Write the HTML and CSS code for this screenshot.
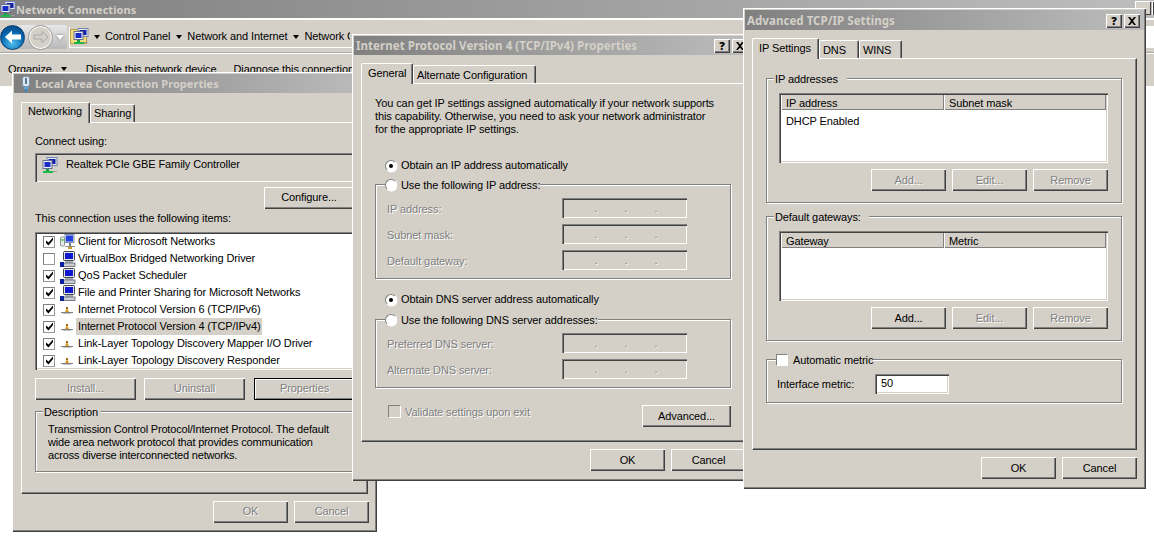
FILE: index.html
```html
<!DOCTYPE html>
<html lang="en">
<head>
<meta charset="utf-8">
<title>Network Connections</title>
<link rel="stylesheet" href="styles.css">
</head>
<body>
<svg class="defs" width="0" height="0" aria-hidden="true">
  <symbol id="i-net" viewBox="0 0 16 16">
    <rect x="5" y="0.5" width="10" height="8" fill="#dfe6f5" stroke="#7a86a8"/>
    <rect x="6.5" y="2" width="7" height="5" fill="#1420a8"/>
    <rect x="1" y="3.5" width="9" height="8" fill="#eef0f6" stroke="#66708c"/>
    <rect x="2.5" y="5" width="6" height="5" fill="#1a2cc8"/>
    <rect x="4" y="12" width="3" height="2" fill="#18a040"/>
    <rect x="1" y="14" width="10" height="2" fill="#1fb84c"/>
    <rect x="11" y="14" width="4" height="1" fill="#a0a0a0"/>
  </symbol>
  <symbol id="i-pc" viewBox="0 0 16 16">
    <rect x="3.5" y="0.5" width="11" height="9" rx="1" fill="#e4e6ea" stroke="#40444c"/>
    <rect x="5" y="2" width="8" height="6" fill="#1018d0"/>
    <rect x="5" y="10" width="8" height="2" fill="#b0b4bc"/>
    <rect x="3" y="12" width="12" height="3.5" fill="#c8ccd4" stroke="#50545c" stroke-width="0.7"/>
    <rect x="0" y="11" width="4" height="5" fill="#0a1ea0"/>
  </symbol>
  <symbol id="i-client" viewBox="0 0 16 16">
    <rect x="0.5" y="3" width="4" height="9" rx="1" fill="#e8ece8" stroke="#8a9a8a"/>
    <rect x="1.5" y="5" width="2" height="2" fill="#50c050"/>
    <rect x="5" y="0.5" width="9" height="8" fill="#dce4f4" stroke="#8090b0"/>
    <rect x="6" y="1.5" width="7" height="6" fill="#2040e0"/>
    <rect x="9" y="9" width="2" height="3" fill="#708090"/>
    <rect x="5" y="12" width="10" height="1" fill="#909090"/>
    <rect x="8" y="13" width="4" height="2" fill="#d0a020"/>
  </symbol>
  <symbol id="i-proto" viewBox="0 0 16 16">
    <rect x="1" y="10" width="12" height="1" fill="#808080"/>
    <path d="M5 10 L7 6 L9 10 Z" fill="#d89a20"/>
    <rect x="6" y="5" width="2" height="2" fill="#a06a10"/>
    <rect x="3" y="11" width="8" height="1" fill="#c0c0c0"/>
  </symbol>
  <symbol id="i-plug" viewBox="0 0 16 16">
    <rect x="4.500" y="0.5" width="7" height="10" rx="2" fill="#dbe9f4" stroke="#7a93a8"/>
    <rect x="7" y="2" width="2" height="6" fill="#5c7c96"/>
    <rect x="6" y="11" width="4" height="2" fill="#5fa8d8"/>
    <rect x="7" y="13" width="2" height="3" fill="#2f86c8"/>
  </symbol>
  <symbol id="i-folder" viewBox="0 0 18 20">
    <path d="M0.5 2 h7 l2 2 h8 v13 h-17 Z" fill="#f4dc7c" stroke="#b59a3c"/>
  </symbol>
  <symbol id="i-x" viewBox="0 0 10 8">
    <path d="M1 0 L3 0 L5 2.500 L7 0 L9 0 L6 4 L9 8 L7 8 L5 5.500 L3 8 L1 8 L4 4 Z" fill="#000"/>
  </symbol>
  <symbol id="i-check" viewBox="0 0 9 9">
    <path d="M1 3.500 L1 6 L3.500 8.500 L8 3 L8 0.500 L3.500 5.500 Z" fill="#000"/>
  </symbol>
</svg>

<div class="desk">
  <header class="explorer-title">
    <svg class="ico16 explorer-ico"><use href="#i-net"/></svg>
    <span class="explorer-name">Network Connections</span>
    <span class="explorer-ctl"><i></i><i></i></span>
  </header>
  <div class="explorer-bars">
    <nav class="navrow">
      <div class="navpill">
        <span class="nav-back"><svg width="20" height="16" viewBox="0 0 20 16"><path d="M2 8 L9 1.500 V5.500 H18 V10.500 H9 V14.500 Z" fill="#fff"/></svg></span>
        <span class="nav-fwd"><svg width="18" height="14" viewBox="0 0 18 14"><path d="M16 7 L10 1.500 V5 H2 V9 H10 V12.500 Z" fill="#d4d0c8" stroke="#a8a8a8"/></svg></span>
        <span class="nav-drop"></span>
      </div>
      <div class="addr">
        <span class="addr-ico"><svg class="addr-folder"><use href="#i-folder"/></svg><svg class="addr-net"><use href="#i-net"/></svg></span>
        <span class="crumb first">Control Panel</span>
        <span class="crumb">Network and Internet</span>
        <span class="crumb crumb-last"><span class="crumb-clip">Network Connections</span></span>
        <span class="addr-search"></span>
      </div>
    </nav>
    <div class="cmdrow">
      <span class="cmd cmd-org">Organize</span>
      <span class="cmd-arrow"></span>
      <span class="cmd cmd-dis">Disable this network device</span>
      <span class="cmd">Diagnose this connection</span>
    </div>
  </div>

  <section class="win win-lan">
    <div class="titlebar tb-lan"><svg class="ico16 lan-ico"><use href="#i-plug"/></svg><span>Local Area Connection Properties</span></div>
    <div class="tabs tabs-lan">
      <span class="tab active t-net">Networking</span>
      <span class="tab t-share">Sharing</span>
    </div>
    <div class="panel panel-lan">
      <div class="txt">Connect using:</div>
      <div class="adapter sunken"><svg class="ico16"><use href="#i-net"/></svg><span>Realtek PCIe GBE Family Controller</span></div>
      <div class="cfg-row"><button class="btn btn-cfg">Configure...</button></div>
      <div class="txt uses">This connection uses the following items:</div>
      <ul class="items sunken">
        <li class="item"><span class="cb on"><svg><use href="#i-check"/></svg></span><svg class="ico16"><use href="#i-client"/></svg><span class="lbl">Client for Microsoft Networks</span></li>
        <li class="item"><span class="cb"></span><svg class="ico16"><use href="#i-pc"/></svg><span class="lbl">VirtualBox Bridged Networking Driver</span></li>
        <li class="item"><span class="cb on"><svg><use href="#i-check"/></svg></span><svg class="ico16"><use href="#i-pc"/></svg><span class="lbl">QoS Packet Scheduler</span></li>
        <li class="item"><span class="cb on"><svg><use href="#i-check"/></svg></span><svg class="ico16"><use href="#i-pc"/></svg><span class="lbl">File and Printer Sharing for Microsoft Networks</span></li>
        <li class="item"><span class="cb on"><svg><use href="#i-check"/></svg></span><svg class="ico16"><use href="#i-proto"/></svg><span class="lbl">Internet Protocol Version 6 (TCP/IPv6)</span></li>
        <li class="item"><span class="cb on"><svg><use href="#i-check"/></svg></span><svg class="ico16"><use href="#i-proto"/></svg><span class="lbl sel">Internet Protocol Version 4 (TCP/IPv4)</span></li>
        <li class="item"><span class="cb on"><svg><use href="#i-check"/></svg></span><svg class="ico16"><use href="#i-proto"/></svg><span class="lbl">Link-Layer Topology Discovery Mapper I/O Driver</span></li>
        <li class="item"><span class="cb on"><svg><use href="#i-check"/></svg></span><svg class="ico16"><use href="#i-proto"/></svg><span class="lbl">Link-Layer Topology Discovery Responder</span></li>
      </ul>
      <div class="item-btns">
        <button class="btn btn-wide dis"><span>Install...</span></button>
        <button class="btn btn-wide dis"><span>Uninstall</span></button>
        <button class="btn btn-wide btn-default dis"><span>Properties</span></button>
      </div>
      <div class="group g-desc">
        <div class="legend"><span class="lg-text lg-desc">Description</span></div>
        <p class="desc">Transmission Control Protocol/Internet Protocol. The default<br>wide area network protocol that provides communication<br>across diverse interconnected networks.</p>
      </div>
    </div>
    <div class="footer footer-lan">
      <button class="btn btn-foot dis"><span>OK</span></button>
      <button class="btn btn-foot dis"><span>Cancel</span></button>
    </div>
  </section>

  <section class="win win-ip4">
    <div class="titlebar tb-ip4"><span>Internet Protocol Version 4 (TCP/IPv4) Properties</span><span class="ctl"><b class="ctl-btn">?</b><b class="ctl-btn"><svg><use href="#i-x"/></svg></b></span></div>
    <div class="tabs tabs-ip4">
      <span class="tab active t-gen">General</span>
      <span class="tab t-alt">Alternate Configuration</span>
    </div>
    <div class="panel panel-ip4">
      <p class="intro">You can get IP settings assigned automatically if your network supports<br>this capability. Otherwise, you need to ask your network administrator<br>for the appropriate IP settings.</p>
      <div class="radio-row r-first"><span class="radio on"></span><span>Obtain an IP address automatically</span></div>
      <div class="group g-ip">
        <div class="legend lg-radio"><span class="radio"></span><span class="lg-text">Use the following IP address:</span></div>
        <div class="field-row first"><span class="dis-txt">IP address:</span><span class="ipf"><i>.</i><i>.</i><i>.</i></span></div>
        <div class="field-row"><span class="dis-txt">Subnet mask:</span><span class="ipf"><i>.</i><i>.</i><i>.</i></span></div>
        <div class="field-row"><span class="dis-txt">Default gateway:</span><span class="ipf"><i>.</i><i>.</i><i>.</i></span></div>
      </div>
      <div class="radio-row r-dns"><span class="radio on"></span><span>Obtain DNS server address automatically</span></div>
      <div class="group g-dns">
        <div class="legend lg-radio"><span class="radio"></span><span class="lg-text">Use the following DNS server addresses:</span></div>
        <div class="field-row first"><span class="dis-txt">Preferred DNS server:</span><span class="ipf"><i>.</i><i>.</i><i>.</i></span></div>
        <div class="field-row"><span class="dis-txt">Alternate DNS server:</span><span class="ipf"><i>.</i><i>.</i><i>.</i></span></div>
      </div>
      <div class="validate-row">
        <span class="validate"><span class="cb cb-dis"></span><span class="dis-txt">Validate settings upon exit</span></span>
        <button class="btn btn-adv">Advanced...</button>
      </div>
    </div>
    <div class="footer">
      <button class="btn btn-foot">OK</button>
      <button class="btn btn-foot">Cancel</button>
    </div>
  </section>

  <section class="win win-adv">
    <div class="titlebar tb-adv"><span>Advanced TCP/IP Settings</span><span class="ctl"><b class="ctl-btn">?</b><b class="ctl-btn"><svg><use href="#i-x"/></svg></b></span></div>
    <div class="tabs tabs-adv">
      <span class="tab active t-ips">IP Settings</span>
      <span class="tab t-dns">DNS</span>
      <span class="tab t-wins">WINS</span>
    </div>
    <div class="panel panel-adv">
      <div class="group g-adv">
        <div class="legend"><span class="lg-text lg-ip">IP addresses</span></div>
        <div class="lv sunken">
          <div class="lv-head"><span class="lv-col c1">IP address</span><span class="lv-col c2">Subnet mask</span></div>
          <div class="lv-row">DHCP Enabled</div>
        </div>
        <div class="adv-btns">
          <button class="btn btn-foot dis"><span>Add...</span></button>
          <button class="btn btn-foot dis"><span>Edit...</span></button>
          <button class="btn btn-foot dis"><span>Remove</span></button>
        </div>
      </div>
      <div class="group g-adv g-gw">
        <div class="legend"><span class="lg-text lg-gw">Default gateways:</span></div>
        <div class="lv sunken">
          <div class="lv-head"><span class="lv-col c1">Gateway</span><span class="lv-col c2">Metric</span></div>
        </div>
        <div class="adv-btns">
          <button class="btn btn-foot">Add...</button>
          <button class="btn btn-foot dis"><span>Edit...</span></button>
          <button class="btn btn-foot dis"><span>Remove</span></button>
        </div>
      </div>
      <div class="group g-metric">
        <div class="legend lg-check"><span class="cb cb-legend"></span><span class="lg-text">Automatic metric</span></div>
        <div class="metric-row"><span class="metric-lbl">Interface metric:</span><span class="metric-in sunken">50</span></div>
      </div>
    </div>
    <div class="footer">
      <button class="btn btn-foot">OK</button>
      <button class="btn btn-foot">Cancel</button>
    </div>
  </section>
</div>
</body>
</html>
```

FILE: styles.css
```css
* { box-sizing: border-box; }
html, body { margin: 0; padding: 0; background: #fff; }
body {
  font-family: "Liberation Sans", sans-serif;
  font-size: 11px;
  line-height: 13px;
  letter-spacing: -0.1px;
  color: #000;
}
.defs { position: absolute; }
.desk { position: relative; width: 1154px; height: 536px; overflow: hidden; background: #fff; }
.ico16 { width: 16px; height: 16px; flex: none; display: block; }
p { margin: 0; }
i { font-style: normal; }

/* Background explorer window */
.explorer-title {
  height: 18px;
  display: flex;
  align-items: center;
  background: linear-gradient(90deg, #808080, #bdbdbd);
  color: #d4d0c8;
  font-family: "Noto Sans", sans-serif;
  font-weight: bold;
  font-size: 11px;
  letter-spacing: 0.05px;
}
.explorer-ico { margin: 0; }
.explorer-ctl { margin-left: auto; display: flex; gap: 1px; align-self: flex-start; margin-top: 1px; padding-right: 0; }
.explorer-ctl i { width: 16px; height: 14px; background: #d4d0c8; box-shadow: inset 1px 1px #fff, inset -1px -1px #404040; }
.explorer-ctl i:last-child { width: 2px; }
.explorer-bars { height: 68px; background: #d4d0c8; border-top: 2px solid #fff; }
.navrow { height: 33px; display: flex; align-items: center; padding-top: 2px; border-bottom: 1px solid #a8a8a8; box-shadow: 0 1px #fff; }
.navpill { width: 67px; height: 24px; margin-left: 0; flex: none; display: flex; align-items: center; background: linear-gradient(#e8e8e8, #b8b8b8); border-radius: 12px 2px 2px 12px; }
.nav-back { width: 25px; height: 25px; flex: none; border-radius: 50%; display: flex; align-items: center; justify-content: center; background: radial-gradient(circle at 50% 75%, #4ec0f0 0, #0a66ae 55%, #063a78 100%); border: 1px solid #0a3f70; }
.nav-fwd { width: 25px; height: 25px; margin-left: 3px; flex: none; border-radius: 50%; display: flex; align-items: center; justify-content: center; background: #d4d0c8; border: 1px solid #9a9a9a; box-shadow: inset 0 0 0 1px #fff; }
.nav-drop { margin-left: 3px; width: 0; height: 0; border: 4px solid transparent; border-top: 5px solid #fff; border-bottom: 0; filter: drop-shadow(0 0 1px #707070); }
.addr { height: 21px; flex: 1; margin-left: 2px; display: flex; align-items: center; border-bottom: 1px solid #fff; border-left: 1px solid #fff; }
.addr-ico { width: 17px; height: 19px; flex: none; display: flex; position: relative; }
.addr-folder { width: 18px; height: 20px; }
.addr-net { width: 16px; height: 16px; position: absolute; left: 3px; top: 1px; }
.crumb { display: flex; align-items: center; white-space: nowrap; margin-left: 6px; }
.crumb.first { margin-left: 7px; }
.crumb::before { content: ""; width: 0; height: 0; margin-right: 5px; border: 3px solid transparent; border-top: 4px solid #000; border-bottom: 0; }
.crumb-clip { display: block; width: 46px; overflow: hidden; }
.addr-search { margin-left: auto; width: 200px; height: 21px; background: #fff; flex: none; }
.cmdrow { height: 33px; padding: 10px 0 0 8px; display: flex; align-items: flex-start; white-space: nowrap; }
.cmd-arrow { width: 0; height: 0; margin: 4px 19px 0 9px; border: 3px solid transparent; border-top: 4px solid #000; border-bottom: 0; }
.cmd-dis { margin-right: 17px; }

/* Dialog windows sit on a free desktop */
.win {
  position: absolute;
  display: flex;
  flex-direction: column;
  padding: 2px;
  background: #d4d0c8;
  box-shadow: inset 1px 1px #fff, inset -1px -1px #404040, inset -2px -2px #808080;
}
.win-lan { left: 12px; top: 72px; width: 365px; height: 460px; }
.win-ip4 { left: 352px; top: 34px; width: 402px; height: 447px; }
.win-adv { left: 743px; top: 8px; width: 403px; height: 481px; }

.titlebar {
  flex: none;
  display: flex;
  align-items: center;
  background: linear-gradient(90deg, #808080, #bdbdbd);
  color: #d4d0c8;
  font-family: "Noto Sans", sans-serif;
  font-weight: bold;
  font-size: 11.5px;
  letter-spacing: 0.05px;
  white-space: nowrap;
}
.tb-lan { height: 19px; padding-left: 2px; font-size: 11px; }
.lan-ico { margin-right: 1px; margin-left: 2px; }
.tb-ip4 { height: 19px; padding-left: 2px; }
.tb-adv { height: 20px; padding: 1px 0 0 2px; }
.ctl { margin-left: auto; display: flex; gap: 2px; padding-right: 4px; }
.ctl-btn { width: 16px; height: 14px; background: #d4d0c8; color: #000; font-size: 11px; line-height: 14px; text-align: center; display: flex; align-items: center; justify-content: center; box-shadow: inset 1px 1px #fff, inset -1px -1px #404040, inset -2px -2px #808080; }
.ctl-btn svg { width: 10px; height: 8px; display: block; }

/* Tabs */
.tabs { flex: none; display: flex; align-items: flex-end; position: relative; z-index: 1; margin-left: 7px; white-space: nowrap; }
.tabs-lan { height: 21px; margin-top: 8px; }
.tabs-ip4 { height: 20px; margin-top: 8px; }
.tabs-adv { height: 20px; margin-top: 8px; }
.tab {
  height: 18px;
  margin-bottom: 0;
  padding-left: 3px;
  display: flex;
  align-items: center;
  background: #d4d0c8;
  border-top: 1px solid #fff;
  border-left: 1px solid #fff;
  border-right: 1px solid #404040;
  border-radius: 2px 2px 0 0;
  box-shadow: inset -1px 0 #808080;
}
.tab.active { height: 21px; margin-bottom: -1px; padding-bottom: 3px; padding-left: 6px; }
.tabs-ip4 .tab, .tabs-adv .tab { padding-top: 2px; }
.tabs-ip4 .tab.active, .tabs-adv .tab.active { padding-top: 2px; padding-bottom: 3px; }
.t-net { width: 69px; }
.t-share { width: 45px; }
.t-gen { width: 52px; }
.t-alt { width: 123px; }
.t-ips { width: 67px; }
.t-dns { width: 40px; }
.t-wins { width: 43px; }

/* Panels */
.panel {
  flex: none;
  margin-left: 7px;
  border-top: 1px solid #fff;
  border-left: 1px solid #fff;
  border-right: 1px solid #404040;
  border-bottom: 1px solid #404040;
  box-shadow: inset -1px -1px #808080;
}
.panel-lan { width: 347px; height: 372px; padding: 12px 0 0 13px; }
.panel-ip4 { width: 385px; height: 359px; padding: 13px 0 0 13px; }
.panel-adv { width: 385px; height: 392px; padding: 19px 0 0 13px; }

.footer { flex: none; display: flex; justify-content: flex-end; gap: 6px; padding: 7px 6px 0 0; }
.win-adv .footer { padding-right: 7px; }
.footer-lan { padding-right: 6px; }

/* Controls */
.txt { height: 13px; white-space: nowrap; }
.sunken { box-shadow: inset 1px 1px #808080, inset 2px 2px #404040, inset -1px -1px #fff, inset -2px -2px #d4d0c8; }
.btn {
  display: block;
  height: 22px;
  padding: 0;
  border: 0;
  font: inherit;
  letter-spacing: inherit;
  color: #000;
  background: #d4d0c8;
  box-shadow: inset 1px 1px #fff, inset -1px -1px #404040, inset -2px -2px #808080;
}
.win-lan .btn { padding-bottom: 2px; }
.dis { color: #808080; }
.dis span, .dis-txt { color: #808080; text-shadow: 1px 1px 0 #fff; }
.dis-txt { white-space: nowrap; }
.btn-foot { width: 75px; flex: none; }
.btn-wide { width: 101px; flex: none; }
.btn-default { box-shadow: inset 1px 1px #000, inset -1px -1px #000, inset 2px 2px #fff, inset -2px -2px #808080; }
.btn-cfg { width: 90px; }
.btn-adv { width: 89px; padding-top: 1px; }

.adapter { width: 319px; height: 29px; margin-top: 5px; padding: 4px 0 0 7px; display: flex; gap: 8px; align-items: flex-start; white-space: nowrap; background: #d4d0c8; }
.adapter span { padding-top: 1px; }
.cfg-row { display: flex; justify-content: flex-end; width: 319px; margin-top: 5px; }
.uses { margin-top: 3px; }
.items { list-style: none; margin: 7px 0 0; padding: 1px 0 0 8px; width: 319px; height: 138px; background: #fff; overflow: hidden; letter-spacing: -0.12px; }
.item { height: 17px; display: flex; align-items: center; white-space: nowrap; }
.item .cb { margin-right: 5px; }
.item .lbl { height: 17px; padding: 2px 1px 0 2px; }
.sel { background: #d4d0c8; }
.cb { width: 12px; height: 12px; flex: none; display: block; background: #fff; border: 1px solid #9a9a9a; border-top-color: #808080; border-left-color: #808080; }
.cb svg { width: 9px; height: 9px; display: block; margin: 0.5px 0 0 0.5px; }
.cb-dis { width: 13px; height: 13px; background: #d4d0c8; border-color: #808080 #fff #fff #808080; }
.cb-legend { width: 12px; height: 12px; border-color: #808080 #fff #fff #808080; }
.item-btns { display: flex; gap: 8px; margin-top: 8px; }
.item-btns .btn-default { margin-left: 1px; }

.group { position: relative; border: 1px solid #808080; box-shadow: 1px 1px 0 #fff, inset 1px 1px 0 #fff; }
.legend { height: 13px; margin-top: -7px; padding-left: 7px; display: flex; align-items: center; white-space: nowrap; }
.lg-text { background: #d4d0c8; height: 13px; padding-top: 1px; }
.legend .lg-desc { padding-left: 1px; padding-right: 3px; }
.legend .lg-ip { padding-left: 1px; padding-right: 9px; }
.legend .lg-gw { padding-left: 1px; padding-right: 8px; }
.g-desc { width: 319px; height: 61px; margin-top: 11px; }
.desc { padding: 5px 0 0 12px; white-space: nowrap; letter-spacing: -0.18px; }
.intro { white-space: nowrap; }
.radio-row { display: flex; align-items: center; gap: 4px; height: 13px; padding-left: 10px; white-space: nowrap; }
.r-first { margin-top: 23px; }
.r-dns { margin-top: 13px; }
.radio { width: 12px; height: 12px; flex: none; border-radius: 50%; background: #fff; border: 1px solid; border-color: #808080 #fff #fff #808080; display: flex; align-items: center; justify-content: center; box-shadow: 0.5px 0.5px 0 #fff; }
.radio.on::after { content: ""; width: 4px; height: 4px; border-radius: 50%; background: #000; }
.lg-radio { padding-left: 9px; }
.lg-radio .lg-text { padding-left: 4px; }
.g-ip { width: 356px; height: 95px; margin-top: 12px; }
.g-dns { width: 356px; height: 69px; margin-top: 14px; }
.r-dns + .g-dns { margin-top: 13px; }
.r-dns { margin-top: 14px; }
.field-row { display: flex; align-items: center; justify-content: space-between; height: 20px; margin-top: 6px; padding: 0 43px 0 11px; }
.field-row.first { margin-top: 7px; }
.field-row .dis-txt, .validate .dis-txt { margin-top: 2px; }
.ipf { width: 125px; height: 20px; flex: none; display: flex; padding-left: 19px; align-items: flex-end; color: #808080; box-shadow: inset 1px 1px #808080, inset 2px 2px #404040, inset -1px -1px #fff, inset -2px -2px #d4d0c8; }
.ipf i { width: 30px; height: 17px; text-align: center; text-shadow: 1px 1px 0 #fff; line-height: 14px; }
.validate-row { display: flex; justify-content: space-between; width: 356px; margin-top: 17px; padding-left: 13px; }
.validate { display: flex; align-items: center; gap: 4px; height: 13px; }

.g-adv { width: 356px; height: 125px; }
.g-gw { margin-top: 13px; }
.lv { width: 329px; height: 70px; margin: 8px 0 0 12px; padding: 2px; background: #fff; }
.lv-head { display: flex; height: 15px; background: #d4d0c8; }
.lv-col { height: 15px; padding: 2px 0 0 5px; box-shadow: inset -1px 0 #808080, inset 1px 0 #fff, inset 0 -1px #808080; }
.c1 { width: 163px; }
.c2 { width: 162px; }
.lv-row { padding: 5px 0 0 5px; }
.adv-btns { display: flex; justify-content: flex-end; gap: 6px; margin: 6px 13px 0 0; }
.g-metric { width: 356px; height: 44px; margin-top: 18px; }
.lg-check { padding-left: 9px; }
.lg-check .lg-text { padding-left: 5px; }
.metric-row { display: flex; align-items: center; margin-top: 8px; padding-left: 10px; white-space: nowrap; }
.metric-lbl { width: 98px; flex: none; }
.metric-in { width: 74px; height: 20px; padding: 3px 0 0 6px; background: #fff; }
```
